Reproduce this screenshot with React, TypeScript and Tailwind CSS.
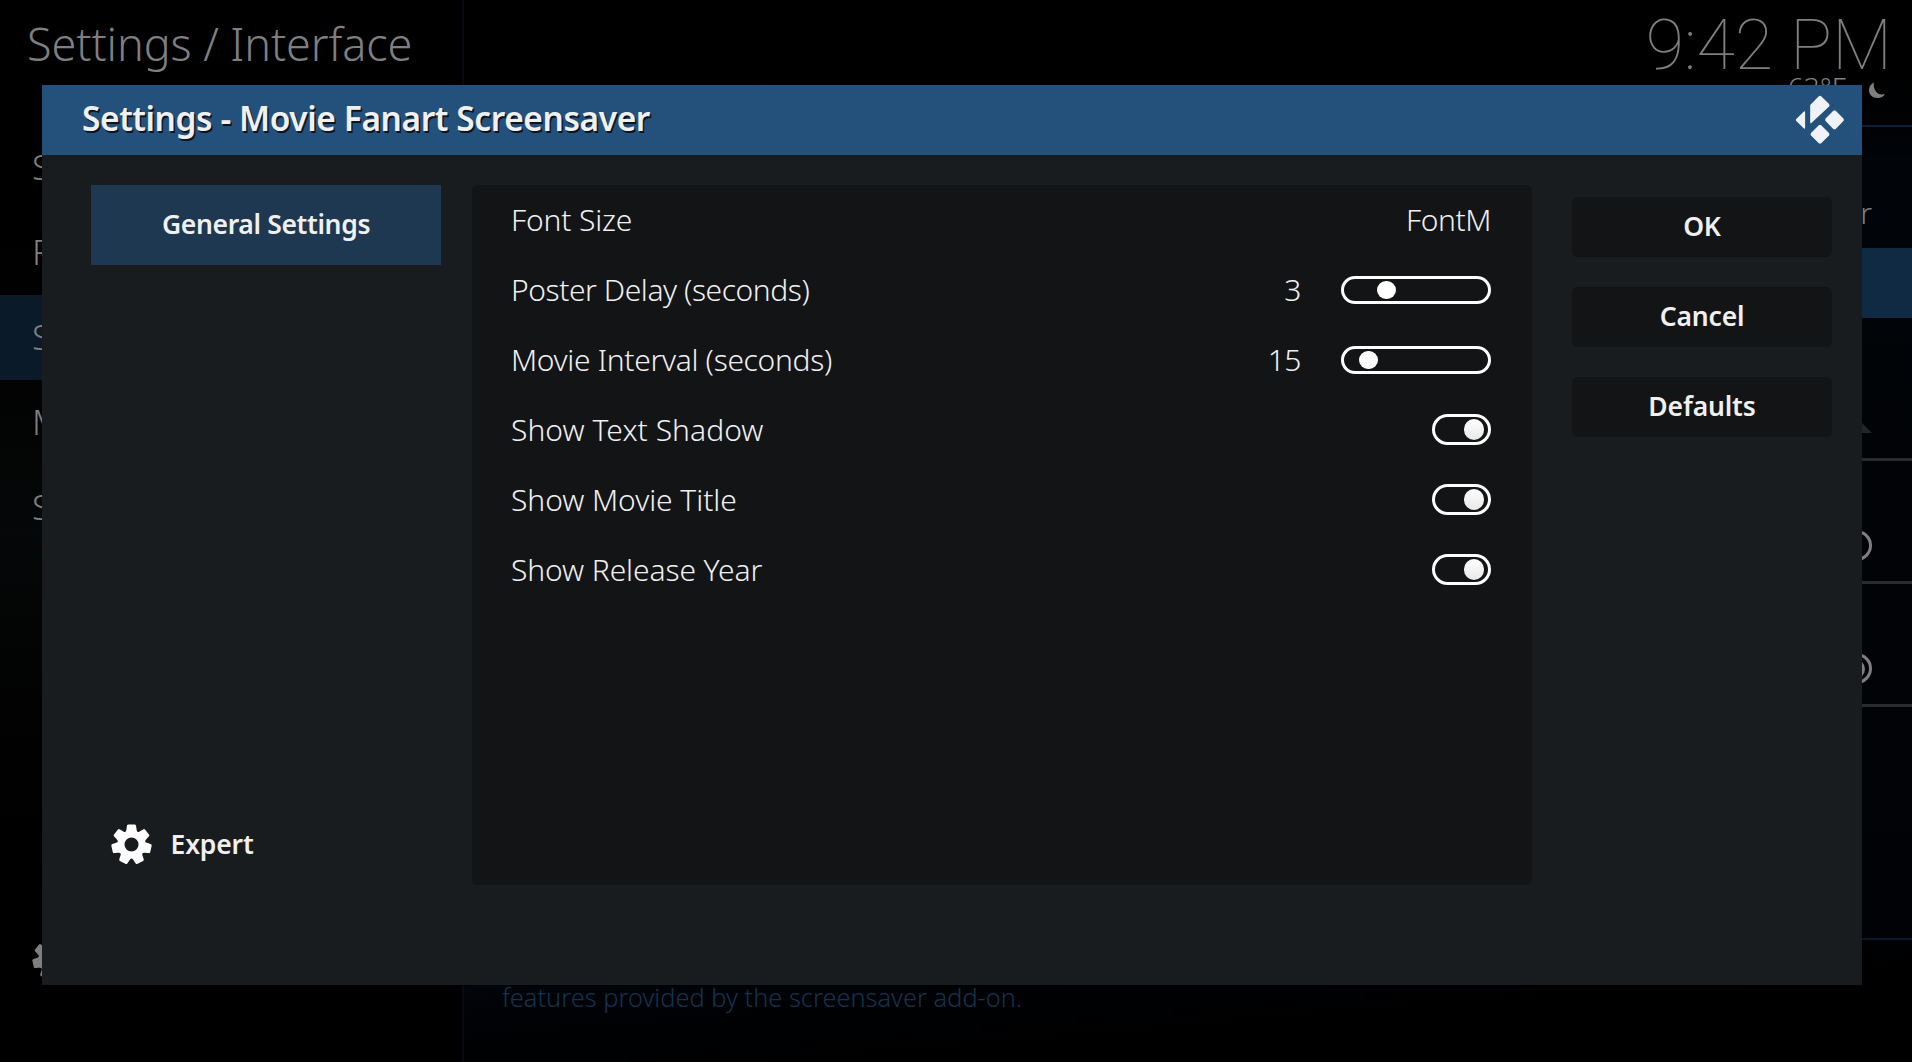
import React from "react";

const point = (radius: number, degrees: number) => {
  const a = ((degrees - 90) * Math.PI) / 180;
  return `${(radius * Math.cos(a)).toFixed(2)} ${(radius * Math.sin(a)).toFixed(2)}`;
};

const GEAR_PATH =
  Array.from({ length: 7 }, (_, i) => {
    const c = (i * 360) / 7;
    return `${i === 0 ? "M" : "L"}${point(15.4, c - 19.5)} L${point(19, c - 14)} Q${point(20.3, c - 13)} ${point(20.2, c - 9.5)} L${point(20.2, c + 9.5)} Q${point(20.3, c + 13)} ${point(19, c + 14)} L${point(15.4, c + 19.5)} Q${point(12.8, c + 25.71)} ${point(15.4, c + 31.93)}`;
  }).join(" ") + "Z M7 0A7 7 0 1 0 -7 0A7 7 0 1 0 7 0Z";

function Gear({ className }: { className: string }) {
  return (
    <svg viewBox="-20.5 -20.5 41 41" className={`h-[41px] w-[41px] shrink-0 ${className}`} fill="currentColor" fillRule="evenodd">
      <path d={GEAR_PATH} />
    </svg>
  );
}

function KodiLogo() {
  return (
    <svg viewBox="0 0 50 50" className="h-[50px] w-[50px]" fill="#eff3f8" stroke="#eff3f8" strokeWidth="1.4" strokeLinejoin="round">
      <path d="M15.9 10.2 L24.3 1.7 Q25 1.2 25.7 1.7 L33.6 9.6 Q34.1 10.4 33.6 11.1 L15.9 27.6Z" />
      <path d="M9.4 16.9 L9.4 33.1 L1.8 25.6 Q1.2 25 1.8 24.4Z" />
      <path d="M38.8 16.2 Q39.5 15.7 40.2 16.2 L47.9 24.1 Q48.4 24.9 47.9 25.6 L40.2 33.4 Q39.5 33.9 38.8 33.4 L31.1 25.6 Q30.6 24.9 31.1 24.1Z" />
      <path d="M24.3 30.7 Q25 30.2 25.7 30.7 L33.5 38.6 Q34 39.4 33.5 40.1 L25.7 47.7 Q25 48.2 24.3 47.7 L16.5 40.1 Q16 39.4 16.5 38.6Z" />
    </svg>
  );
}

function Slider({ offset }: { offset: number }) {
  return (
    <div className="flex h-7 w-[150px] items-center rounded-full border-x-[3.5px] border-y-[3px] border-white">
      <div className="h-[18px] w-[19px] rounded-full bg-white" style={{ marginLeft: offset }} />
    </div>
  );
}

function Toggle() {
  return (
    <div className="flex h-[31px] w-[59px] -translate-y-px items-center justify-end rounded-full border-[3px] border-white pr-1">
      <div className="h-[21px] w-5 rounded-full bg-linear-to-b from-white to-[#e8e8e8]" />
    </div>
  );
}

function Row({ label, tracking, children }: { label: string; tracking: string; children: React.ReactNode }) {
  return (
    <div className="flex h-[70px] items-center pr-[41px] pl-[39px] text-[30px] leading-[70px] font-light">
      <span className={`flex-1 whitespace-nowrap ${tracking}`}>{label}</span>
      {children}
    </div>
  );
}

function Choice({ label }: { label: string }) {
  return (
    <button className="flex h-[60px] items-center justify-center rounded-md bg-[#131416] pb-px text-[26.5px] leading-none font-semibold tracking-[-0.15px]">
      {label}
    </button>
  );
}

function Sidebar() {
  return (
    <aside className="flex w-[462px] flex-col bg-linear-to-b from-black via-[#060708] via-50% to-black">
      <h1 className="h-[125px] pt-[11px] pl-[27px] text-[45px] leading-[65px] font-light tracking-[-0.1px]">Settings / Interface</h1>
      <nav className="flex flex-col text-[35px] leading-[84px] font-light">
        {["Skin", "Regional", "Screensaver", "Master lock", "Startup"].map((item, i) => (
          <div key={item} className={`h-[85px] pl-8 ${i === 2 ? "bg-[#0b1a28]" : ""}`}>
            {item}
          </div>
        ))}
      </nav>
      <div className="mt-[389px] pl-8">
        <Gear className="text-[#7f7f7f]" />
      </div>
    </aside>
  );
}

function Backdrop() {
  return (
    <div className="flex h-full">
      <Sidebar />
      <main className="flex flex-1 flex-col border-l-2 border-[#06090d] bg-linear-to-b from-black via-[#010408] via-15% to-[#010205]">
        <header className="flex h-[127px] flex-col items-end border-b-2 border-[#0a1f34] pr-[20px]">
          <div className="h-[75px] pt-[9px] font-['Roboto'] text-[70px] leading-[72px] font-thin">9:42 PM</div>
          <div className="flex gap-[23px] pr-[7px]">
            <span className="text-[28px] leading-6 font-light">63°F</span>
            <svg viewBox="0 0 16 16" className="mt-[7px] h-4 w-4" fill="#7f7f7f">
              <path d="M5 .6C1 2.5 0 6 0 8.5C0 13 4 16 8.5 16C12 16 14.500 14.500 16 12C13 13 9.500 12.500 7.300 10C5 7.500 4.300 4 5 .6Z" />
            </svg>
          </div>
        </header>
        <div className="mt-[51px] h-[70px] pr-10 text-right text-[30px] leading-[70px] font-light">Screensaver</div>
        <div className="h-[70px] bg-[#102a44]" />
        <div className="flex h-[143px] items-end justify-end border-b-[3px] border-[#2a2b2d] pr-10 pb-[25px]">
          <svg viewBox="0 0 20 20" className="h-5 w-5" fill="#232427">
            <path d="M0 20L10 10L20 20Z" />
          </svg>
        </div>
        {[false, true].map((on) => (
          <div key={String(on)} className="flex h-[123px] justify-end border-b-[3px] border-[#2a2b2d] pt-[69px] pr-10">
            <div className="flex h-[31px] w-[59px] items-center justify-end rounded-full border-[3.5px] border-[#7f7f7f] pr-1">
              {on && <div className="h-5 w-5 rounded-full bg-[#7f7f7f]" />}
            </div>
          </div>
        ))}
        <div className="mt-[231px] flex-1 border-t-2 border-[#071a2d] bg-linear-to-br from-[#020c16] via-[#010307] via-25% to-black pt-[32px] pl-[38px] text-[25.4px] leading-[50px] font-light text-[#15334f]">
          features provided by the screensaver add-on.
        </div>
      </main>
    </div>
  );
}

function SettingsDialog() {
  return (
    <section className="absolute top-[85px] left-[42px] flex h-[900px] w-[1820px] flex-col bg-[#181c1e] text-[#f0f0f0]">
      <header className="flex h-[70px] items-center justify-between bg-[#24507c] pr-[17px] pl-10">
        <h2 className="pb-0.5 text-[33.500px] leading-none font-semibold tracking-[-0.42px] [text-shadow:1.5px_2px_0_#0b1520]">Settings - Movie Fanart Screensaver</h2>
        <KodiLogo />
      </header>
      <div className="flex pt-[30px] pl-[49px]">
        <div className="flex h-[700px] w-[350px] flex-col justify-between">
          <div className="flex h-20 items-center justify-center bg-[#1e3851] pb-px text-[26.500px] leading-none font-semibold tracking-[-0.34px]">General Settings</div>
          <div className="flex h-20 items-center gap-[19px] pb-px pl-[19.5px] text-[26.500px] leading-none font-semibold tracking-[-0.15px]">
            <Gear className="text-white" />
            <span className="pb-px">Expert</span>
          </div>
        </div>
        <div className="ml-[31px] h-[700px] w-[1060px] rounded-md bg-[#131416]">
          <Row label="Font Size" tracking="tracking-[-0.15px]">
            <span className="tracking-[-0.4px]">FontM</span>
          </Row>
          <Row label="Poster Delay (seconds)" tracking="tracking-[-0.43px]">
            <span className="mr-[40px] tracking-[-0.5px]">3</span>
            <Slider offset={33} />
          </Row>
          <Row label="Movie Interval (seconds)" tracking="tracking-[-0.32px]">
            <span className="mr-[40px] tracking-[-0.5px]">15</span>
            <Slider offset={15} />
          </Row>
          <Row label="Show Text Shadow" tracking="tracking-[0.05px]">
            <Toggle />
          </Row>
          <Row label="Show Movie Title" tracking="tracking-[-0.05px]">
            <Toggle />
          </Row>
          <Row label="Show Release Year" tracking="tracking-[-0.1px]">
            <Toggle />
          </Row>
        </div>
        <div className="mt-3 ml-10 flex w-[260px] flex-col gap-[30px]">
          <Choice label="OK" />
          <Choice label="Cancel" />
          <Choice label="Defaults" />
        </div>
      </div>
    </section>
  );
}

export default function App() {
  return (
    <div className="relative h-[1062px] w-[1912px] overflow-hidden bg-black font-['Noto_Sans',sans-serif] text-[#7f7f7f]">
      <Backdrop />
      <SettingsDialog />
    </div>
  );
}
